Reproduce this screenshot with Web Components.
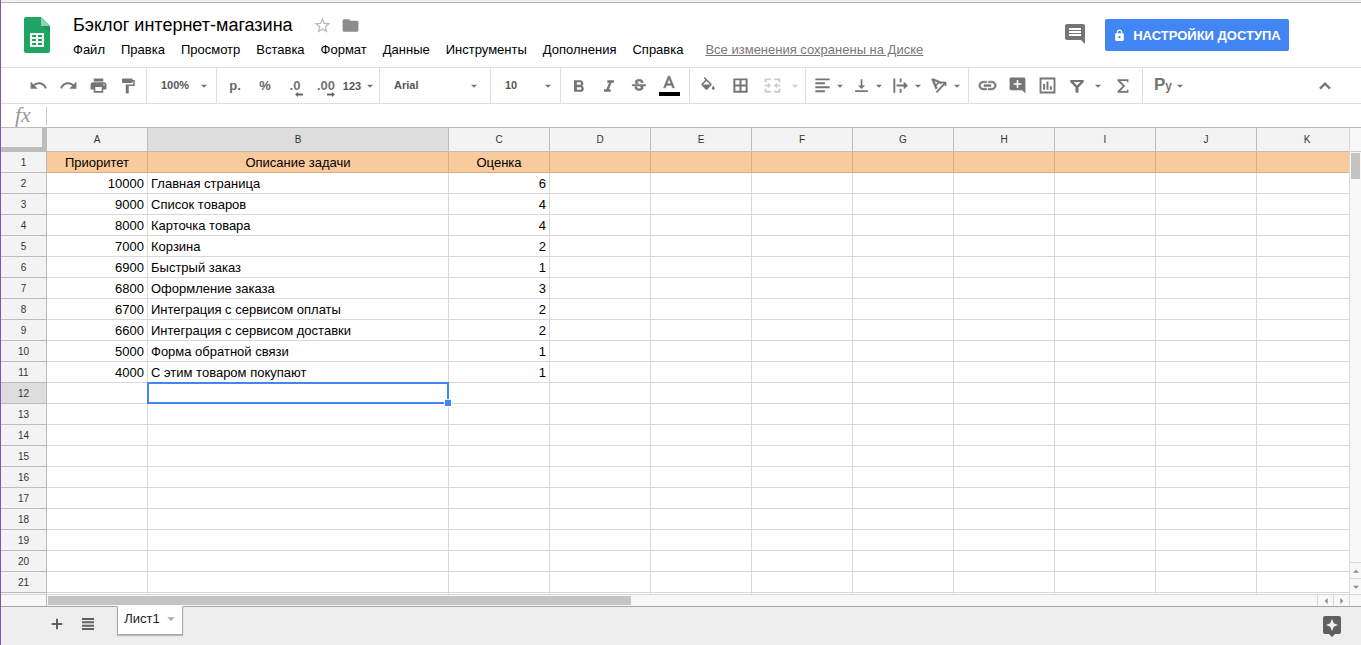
<!DOCTYPE html>
<html lang="ru">
<head>
<meta charset="utf-8">
<title>Бэклог интернет-магазина</title>
<style>
html, body { margin: 0; height: 100%; }
body { font-family: "Liberation Sans", Arial, sans-serif; font-size: 13px; color: #000; background: #fff; overflow: hidden; }
</style>
</head>
<body>
<sheet-app></sheet-app>
<script>
const RESET = `
*, *::before, *::after { box-sizing: border-box; }
button, select, input { font: inherit; color: inherit; background: none; border: 0; margin: 0; padding: 0; border-radius: 0; outline: 0; appearance: none; }
button, select { cursor: pointer; }
`;

const ICONS = {
  undo: '<path d="M12.5 8c-2.65 0-5.05.99-6.9 2.6L2 7v9h9l-3.62-3.62c1.39-1.16 3.16-1.88 5.12-1.88 3.54 0 6.55 2.31 7.6 5.5l2.37-.78C21.08 11.03 17.15 8 12.5 8z"/>',
  redo: '<path d="M18.4 10.6C16.55 8.99 14.15 8 11.5 8c-4.65 0-8.58 3.03-9.96 7.22L3.9 16c1.05-3.19 4.05-5.5 7.6-5.5 1.95 0 3.73.72 5.12 1.88L13 16h9V7l-3.6 3.6z"/>',
  print: '<path d="M19 8H5c-1.66 0-3 1.34-3 3v6h4v4h12v-4h4v-6c0-1.66-1.34-3-3-3zm-3 11H8v-5h8v5zm3-7c-.55 0-1-.45-1-1s.45-1 1-1 1 .45 1 1-.45 1-1 1zm-1-9H6v4h12V3z"/>',
  paint: '<path d="M18 4V3c0-.55-.45-1-1-1H5c-.55 0-1 .45-1 1v4c0 .55.45 1 1 1h12c.55 0 1-.45 1-1V6h1v4H9v11c0 .55.45 1 1 1h2c.55 0 1-.45 1-1v-9h8V4h-3z"/>',
  bold: '<path d="M15.6 11.79c.97-.67 1.65-1.77 1.65-2.79 0-2.26-1.75-4-4-4H6v14h8.04c2.09 0 3.71-1.7 3.71-3.79 0-1.52-.86-2.82-2.15-3.42zM9.500 7.500h3.500c.83 0 1.5.67 1.5 1.5s-.67 1.5-1.5 1.5h-3.500v-3zm4 9h-4v-3h4c.83 0 1.500.67 1.500 1.500s-.67 1.500-1.500 1.500z"/>',
  italic: '<path d="M10 5v3h2.210l-3.420 8H6v3h8v-3h-2.210l3.420-8H18V5z"/>',
  strike: '<path stroke="currentColor" stroke-width=".6" d="M7.240 8.750c-.26-.48-.39-1.030-.39-1.670 0-.61.130-1.160.4-1.670.26-.5.63-.93 1.110-1.290.48-.35 1.050-.63 1.700-.83.66-.19 1.390-.29 2.180-.29.81 0 1.540.11 2.210.34.660.22 1.230.54 1.690.94.470.4.830.88 1.080 1.430s.380 1.150.380 1.810h-3.010c0-.31-.05-.59-.15-.85-.09-.27-.24-.49-.44-.68-.2-.19-.45-.33-.75-.44-.3-.1-.66-.16-1.060-.16-.39 0-.74.04-1.030.13s-.53.21-.72.36c-.19.16-.34.34-.44.55-.1.21-.15.43-.15.66 0 .480.250.88.740 1.210.380.25.770.480 1.410.700H7.390c-.05-.08-.11-.17-.15-.250zM21 12v-2H3v2h9.620c.18.07.4.14.55.2.370.17.660.34.870.510s.350.36.430.57c.07.2.110.430.110.690 0 .23-.05.450-.14.660-.09.2-.23.380-.42.530-.19.150-.42.260-.71.350-.29.080-.63.130-1.010.130-.43 0-.83-.04-1.180-.13s-.66-.23-.91-.42c-.25-.19-.45-.44-.59-.75s-.25-.76-.25-1.210H6.400c0 .550.080 1.130.240 1.580s.370.850.650 1.210c.280.350.600.660.980.920.370.260.780.480 1.220.650.440.170.900.300 1.380.390.480.080.960.130 1.440.130.800 0 1.530-.09 2.180-.28s1.210-.45 1.670-.79c.460-.34.820-.77 1.070-1.270s.380-1.070.380-1.710c0-.6-.1-1.140-.31-1.610-.05-.11-.11-.23-.17-.330H21z"/>',
  color: '<path stroke="currentColor" stroke-width=".7" d="M11 5 5.500 19h2.250l1.120-3h6.250l1.120 3h2.250L13 5h-2zm-1.380 9L12 7.670 14.380 14H9.620z"/>',
  fill: '<path d="M16.560 8.940 7.620 0 6.210 1.410l2.380 2.380-5.150 5.150c-.59.590-.59 1.540 0 2.120l5.500 5.500c.290.290.680.440 1.060.440s.770-.150 1.060-.440l5.500-5.500c.590-.580.590-1.530 0-2.120zM5.210 10 10 5.210 14.790 10H5.210zM19 11.500s-2 2.170-2 3.500c0 1.100.900 2 2 2s2-.900 2-2c0-1.330-2-3.500-2-3.500z"/>',
  borders: '<path d="M3 3v18h18V3H3zm7.700 15.500H5.500v-5.200h5.200v5.200zm0-7.800H5.500V5.500h5.200v5.200zm7.800 7.800h-5.200v-5.200h5.200v5.200zm0-7.800h-5.200V5.500h5.200v5.200z"/>',
  merge: '<path d="M2 3h8v2.500H4.500V8H2zM14 3h8v5h-2.500V5.500H14zM2 16h2.500v2.500H10V21H2zM19.500 16H22v5h-8v-2.500h5.500zM2 11h4V8.500l4.500 3.500L6 15.500V13H2zM22 11h-4V8.500L13.500 12l4.500 3.500V13h4z"/>',
  left: '<path d="M3 3h18v2.400H3zM3 8h12v2.400H3zM3 13h18v2.400H3zM3 18h12v2.400H3z"/>',
  bottom: '<path d="M17 12h-3.800V3h-2.400v9H7l5 5 5-5zM3 18.600V21h18v-2.400H3z"/>',
  wrap: '<path d="M3 3h2.400v18H3zM11 3h2.400v5H11zM11 16h2.400v5H11zM7 10.800h9V7l5.500 5-5.500 5v-3.800H7z"/>',
  rotate: '<path stroke="currentColor" stroke-width=".6" d="M2 3l2.100-1 12.800 5.400-1.900 1.900-2.700-1.200-3.800 3.800 1.200 2.700-1.900 1.900zm3.500 1.900 2.300 5.100 2.800-2.800zM21.500 6.500v5.800l-2-2L9.500 21 8 19.500 18 9l-2.500-2.500z"/>',
  link: '<path stroke="currentColor" stroke-width=".6" d="M3.900 12c0-1.710 1.390-3.100 3.100-3.100h4V7H7c-2.760 0-5 2.240-5 5s2.240 5 5 5h4v-1.900H7c-1.710 0-3.100-1.390-3.100-3.100zM8 13h8v-2H8v2zm9-6h-4v1.900h4c1.710 0 3.100 1.390 3.100 3.100s-1.390 3.100-3.100 3.100h-4V17h4c2.760 0 5-2.240 5-5s-2.240-5-5-5z"/>',
  addcomment: '<path d="M22 4c0-1.100-.9-2-2-2H4c-1.100 0-2 .9-2 2v12c0 1.100.9 2 2 2h14l4 4V4zm-5 7h-4v4h-2v-4H7V9h4V5h2v4h4v2z"/>',
  chart: '<path d="M2 2v20h20V2zm17.700 17.700H4.300V4.300h15.400zM6.500 10H9v7.500H6.500zM10.800 7h2.400v10.500h-2.400zM15 13h2.500v4.500H15z"/>',
  filter: '<path d="M3 4v2.500l7 7.500v7h4v-7l7-7.500V4zm4.500 2.500h9L12 11.200z" fill-rule="evenodd"/>',
  sum: '<path d="M18.500 7.500V4h-13v2l6.200 6-6.200 6v2h13v-3.500h-1.800V18H8.800l5.900-6-5.900-6h7.900v1.500z"/>',
  up: '<path d="M12 8l-6 6 1.410 1.410L12 10.830l4.590 4.580L18 14z" stroke="currentColor" stroke-width=".6"/>',
  star: '<path d="M22 9.240l-7.190-.62L12 2 9.190 8.630 2 9.240l5.460 4.730L5.820 21 12 17.270 18.180 21l-1.630-7.030L22 9.240zM12 15.400l-3.760 2.270 1-4.280-3.320-2.880 4.380-.38L12 6.100l1.710 4.040 4.380.38-3.320 2.880 1 4.280L12 15.400z"/>',
  folder: '<path d="M10 4H4c-1.100 0-2 .9-2 2v12c0 1.100.9 2 2 2h16c1.100 0 2-.9 2-2V8c0-1.100-.9-2-2-2h-8l-2-2z"/>',
  comments: '<path d="M22 4c0-1.100-.9-2-2-2H4c-1.100 0-2 .9-2 2v12c0 1.100.9 2 2 2h14l4 4V4zm-4 10H6v-2h12v2zm0-3H6V9h12v2zm0-3H6V6h12v2z"/>',
  lock: '<path d="M18 8h-1V6c0-2.760-2.240-5-5-5S7 3.240 7 6v2H6c-1.100 0-2 .9-2 2v10c0 1.100.9 2 2 2h12c1.100 0 2-.9 2-2V10c0-1.100-.9-2-2-2zm-6 9c-1.100 0-2-.9-2-2s.9-2 2-2 2 .9 2 2-.9 2-2 2zM9 8V6c0-1.660 1.340-3 3-3s3 1.340 3 3v2z"/>',
  plus: '<path d="M10.500 4h3v6.500H20v3h-6.500V20h-3v-6.500H4v-3h6.500z"/>',
  list: '<path d="M3 3h18v3H3zM3 8h18v3H3zM3 13h18v3H3zM3 18h18v3H3z"/>',
  explore: '<path d="M5 2h14a2 2 0 0 1 2 2v14a2 2 0 0 1-2 2h-4l-3 3-3-3H5a2 2 0 0 1-2-2V4a2 2 0 0 1 2-2zm7 3-1.800 4.200L6 11l4.200 1.800L12 17l1.800-4.200L18 11l-4.200-1.800z" fill-rule="evenodd"/>',
  down: '<path d="M3 8h18l-9 9z"/>',
  uptri: '<path d="M3 17h18l-9-9z"/>',
  prev: '<path d="M17 3v18l-9-9z"/>',
  next: '<path d="M7 3v18l9-9z"/>'
};

function define(name, render) {
  customElements.define(name, class extends HTMLElement {
    connectedCallback() {
      if (this.shadowRoot) return;
      const root = this.attachShadow({ mode: 'open' });
      const t = document.createElement('template');
      t.innerHTML = render(this);
      root.append(t.content.cloneNode(true));
    }
  });
}

define('sheet-icon', el => {
  const size = el.getAttribute('size') || 19;
  return `<style>:host{display:inline-flex;flex:none}svg{display:block;fill:currentColor}</style>
  <svg width="${size}" height="${size}" viewBox="0 0 24 24" aria-hidden="true">${ICONS[el.getAttribute('name')]}</svg>`;
});

define('tool-button', el => `<style>${RESET}
:host{display:block;width:30px;flex:none}
button{width:100%;height:35px;display:flex;align-items:center;justify-content:center}
:host([menu]){width:36px}
:host([menu]) button{justify-content:space-between}
.main{display:flex;justify-content:center}
:host([menu]) .main{width:24px}
.arrow{width:12px;display:flex;justify-content:center}
:host([off]){color:#ccc}
</style><button type="button" aria-label="${el.getAttribute('label') || ''}"><span class="main"><slot></slot></span>${el.hasAttribute('menu') ? '<span class="arrow"><sheet-icon name="down" size="8"></sheet-icon></span>' : ''}</button>`);

define('tool-select', el => `<style>${RESET}
:host{display:grid;grid-template-columns:1fr 24px;align-items:center;font-size:11px;font-weight:bold;color:#555}
select{grid-area:1/1/2/3;height:35px;width:100%;padding:0 0 2px 14px}
sheet-icon{grid-area:1/2;justify-content:center;pointer-events:none;color:#777}
</style><select aria-label="${el.getAttribute('label')}"><option>${el.getAttribute('value')}</option></select><sheet-icon name="down" size="8"></sheet-icon>`);

define('sheet-toolbar', () => `<style>${RESET}
:host{display:flex;height:37px;flex:none;border:solid #dedede;border-width:1px 0;color:#757575}
.g{display:flex;border-right:1px solid #dedede;padding:0 3px;flex:none}
.first{padding-left:22px}
.zoom,.size{width:70px;padding:0}.font{width:111px;padding:0 4px 0 0}
.zoom tool-select,.font tool-select,.size tool-select{flex:1}
.num{width:163px}
.text{width:129px}.cell{width:116px;gap:2px}
.align{width:163px;padding-left:4px;gap:3px}
.ins{width:174px}.ins .drop{margin-right:4px}
.last{border:0;padding-left:7px}
.end{margin-left:auto;padding-right:21px}
.t{font-size:13px;font-weight:bold;color:#666}
.dec{display:grid;width:16px;font-size:13px;font-weight:bold;color:#757575;line-height:13px;padding-top:5px}
.dec svg{display:block;fill:#666;height:5px;width:8px;justify-self:end}
.n{font-size:11px;font-weight:bold;color:#555}
.col{display:grid;justify-items:center;color:#757575;padding-bottom:3px}
.col i{width:21px;height:4px;background:#000}
.drop{width:12px;display:flex;align-items:center;justify-content:center}
.py{font-size:17px;font-weight:bold;line-height:20px;padding-left:2px}.py small{font-size:12px}
</style>
<div class="g first">
<tool-button label="Отменить"><sheet-icon name="undo"></sheet-icon></tool-button>
<tool-button label="Повторить"><sheet-icon name="redo"></sheet-icon></tool-button>
<tool-button label="Печать"><sheet-icon name="print"></sheet-icon></tool-button>
<tool-button label="Копировать формат"><sheet-icon name="paint" size="18"></sheet-icon></tool-button></div>
<div class="g zoom"><tool-select label="Масштаб" value="100%"></tool-select></div>
<div class="g num">
<tool-button label="Денежный формат"><span class="t">р.</span></tool-button>
<tool-button label="Процентный формат"><span class="t">%</span></tool-button>
<tool-button label="Уменьшить число знаков"><span class="dec">.0<svg viewBox="0 0 8 5"><path d="M0 2.500 3 0v1.500h5v2H3v1.500z"/></svg></span></tool-button>
<tool-button label="Увеличить число знаков"><span class="dec">.00<svg viewBox="0 0 8 5"><path d="M8 2.500 5 0v1.500H0v2h5v1.500z"/></svg></span></tool-button>
<tool-button menu label="Другие форматы"><span class="n">123</span></tool-button></div>
<div class="g font"><tool-select label="Шрифт" value="Arial"></tool-select></div>
<div class="g size"><tool-select label="Размер шрифта" value="10"></tool-select></div>
<div class="g text">
<tool-button label="Полужирный"><sheet-icon name="bold" size="20"></sheet-icon></tool-button>
<tool-button label="Курсив"><sheet-icon name="italic" size="20"></sheet-icon></tool-button>
<tool-button label="Зачеркнутый"><sheet-icon name="strike" size="18"></sheet-icon></tool-button>
<tool-button label="Цвет текста"><span class="col"><sheet-icon name="color" size="20"></sheet-icon><i></i></span></tool-button></div>
<div class="g cell">
<tool-button label="Цвет заливки"><sheet-icon name="fill" size="18"></sheet-icon></tool-button>
<tool-button label="Границы"><sheet-icon name="borders" size="19"></sheet-icon></tool-button>
<tool-button off label="Объединить"><sheet-icon name="merge" size="19"></sheet-icon></tool-button>
<span class="drop" style="color:#ccc"><sheet-icon name="down" size="8"></sheet-icon></span></div>
<div class="g align">
<tool-button menu label="По горизонтали"><sheet-icon name="left"></sheet-icon></tool-button>
<tool-button menu label="По вертикали"><sheet-icon name="bottom" size="17"></sheet-icon></tool-button>
<tool-button menu label="Перенос текста"><sheet-icon name="wrap"></sheet-icon></tool-button>
<tool-button menu label="Поворот текста"><sheet-icon name="rotate" size="18"></sheet-icon></tool-button></div>
<div class="g ins">
<tool-button label="Ссылка"><sheet-icon name="link" size="21"></sheet-icon></tool-button>
<tool-button label="Комментарий"><sheet-icon name="addcomment"></sheet-icon></tool-button>
<tool-button label="Диаграмма"><sheet-icon name="chart"></sheet-icon></tool-button>
<tool-button label="Фильтр"><sheet-icon name="filter" size="18"></sheet-icon></tool-button>
<span class="drop"><sheet-icon name="down" size="8"></sheet-icon></span>
<tool-button label="Функции"><sheet-icon name="sum" size="20"></sheet-icon></tool-button></div>
<div class="g last"><tool-button menu label="Способы ввода"><span class="py">Р<small>у</small></span></tool-button></div>
<div class="g last end"><tool-button label="Скрыть меню"><sheet-icon name="up" size="22"></sheet-icon></tool-button></div>`);

define('sheet-header', () => `<style>${RESET}
:host{display:flex;height:64px;flex:none;padding:0 72px 0 23px}
.logo{margin-top:14px;width:26px;height:36px;flex:none}
.main{margin-left:23px;padding-top:10px;min-width:0}
.row{display:flex;align-items:center;height:24px}
h1{font-size:18px;line-height:24px;font-weight:normal;margin:0 20px 0 0;white-space:nowrap}
.row button{margin-right:9px;display:flex}
.star{color:#bbb}.folder{color:#8c8c8c}
nav{display:flex;gap:16px;height:24px;align-items:center;white-space:nowrap}
nav a{color:#777;margin-left:6px}
.side{margin:16px 0 0 auto;height:32px;display:flex;align-items:center;gap:18px;color:#757575;flex:none}
.share{height:32px;width:184px;background:#4285f4;color:#fff;border-radius:2px;display:flex;align-items:center;justify-content:center;gap:7px;font-weight:bold;font-size:13px;white-space:nowrap}
</style>
<svg class="logo" viewBox="0 0 26 36" aria-hidden="true"><path fill="#1fa463" d="M2 0h15l9 9v25a2 2 0 0 1-2 2H2a2 2 0 0 1-2-2V2a2 2 0 0 1 2-2z"/><path fill="#8ed1b1" d="M17 0l9 9h-9z"/><path fill="#188a50" d="M18 9h8v7z" opacity=".5"/><path fill="#f1f1f1" fill-rule="evenodd" d="M6 16h14v14H6zM8 18v2h4v-2zm6 0v2h4v-2zM8 22v2h4v-2zm6 0v2h4v-2zM8 26v2h4v-2zm6 0v2h4v-2z"/></svg>
<div class="main"><div class="row"><h1>Бэклог интернет-магазина</h1>
<button class="star" aria-label="Пометить"><sheet-icon name="star" size="19"></sheet-icon></button><button class="folder" aria-label="Переместить"><sheet-icon name="folder" size="19"></sheet-icon></button></div>
<nav>${['Файл','Правка','Просмотр','Вставка','Формат','Данные','Инструменты','Дополнения','Справка'].map(t => `<button type="button">${t}</button>`).join('')}<a href="#">Все изменения сохранены на Диске</a></nav></div>
<div class="side"><button aria-label="Комментарии"><sheet-icon name="comments" size="24"></sheet-icon></button>
<button class="share"><sheet-icon name="lock" size="13"></sheet-icon>НАСТРОЙКИ ДОСТУПА</button></div>`);

define('formula-bar', () => `<style>${RESET}
:host{display:flex;height:24px;flex:none;border-bottom:1px solid #bcbcbc;align-items:center}
label{width:45px;padding:0 0 2px 14px;font:italic 22px/21px "Liberation Serif",serif;color:#999}
input{flex:1;height:18px;border-left:1px solid #ccc;padding:0 6px}
</style><label for="f">fx</label><input id="f" type="text">`);

const ROWS = [[10000,'Главная страница',6],[9000,'Список товаров',4],[8000,'Карточка товара',4],[7000,'Корзина',2],[6900,'Быстрый заказ',1],[6800,'Оформление заказа',3],[6700,'Интеграция с сервисом оплаты',2],[6600,'Интеграция с сервисом доставки',2],[5000,'Форма обратной связи',1],[4000,'С этим товаром покупают',1]];
const COLS = 'ABCDEFGHIJK'.split('');

define('sheet-grid', () => {
  const body = [];
  for (let r = 1; r <= 22; r++) {
    const v = r === 1 ? ['Приоритет', 'Описание задачи', 'Оценка'] : (ROWS[r - 2] || []);
    body.push(`<tr${r === 1 ? ' class="head"' : ''}><th scope="row"${r === 12 ? ' class="on"' : ''}>${r < 22 ? r : ''}</th>${COLS.map((c, i) =>
      `<td${r === 12 && i === 1 ? ' class="sel"' : typeof v[i] === 'number' ? ' class="n"' : ''}>${v[i] === undefined ? '' : v[i]}${r === 12 && i === 1 ? '<i></i>' : ''}</td>`).join('')}</tr>`);
  }
  return `<style>${RESET}
:host{display:block;overflow:hidden;min-width:0;min-height:0}
table{table-layout:fixed;width:1357px;border-collapse:separate;border-spacing:0}
.h{width:46px}.a{width:101px}.b{width:301px}
th,td{border:solid #d9d9d9;border-width:0 1px 1px 0;padding:2px 3px 0;height:21px;line-height:18px;white-space:nowrap}
th{background:#f3f3f3;border-color:#bcbcbc;font-size:10px;font-weight:normal;color:#333;text-align:center}
thead th{height:24px;line-height:23px;padding-top:0}
.corner{border-width:0 5px 5px 0}
.on{background:#ddd}
.n{text-align:right}
.head td{background:#f9cb9c;border-color:#d8ad83;text-align:center}
.sel{position:relative}
.sel::before{content:"";position:absolute;inset:-1px;border:2px solid #4285f4}
.sel i{position:absolute;right:-3px;bottom:-3px;width:6px;height:6px;background:#4285f4;box-shadow:0 0 0 1px #fff}
</style><table><colgroup><col class="h"><col class="a"><col class="b">${'<col class="a">'.repeat(9)}</colgroup>
<thead><tr><th class="corner"></th>${COLS.map(c => `<th scope="col"${c === 'B' ? ' class="on"' : ''}>${c}</th>`).join('')}</tr></thead><tbody>${body.join('')}</tbody></table>`;
});

define('sheet-scroll', el => {
  const v = el.hasAttribute('vertical');
  return `<style>${RESET}
:host{display:flex;background:#f8f8f8;color:#8c8c8c;min-width:0;min-height:0;flex-direction:${v ? 'column' : 'row'};border:solid #d9d9d9;border-width:${v ? '0 0 0 1px' : '1px 0 0'}}
.lead{flex:none;${v ? 'height:24px;border-bottom:1px solid #ccc' : 'width:46px;border-right:1px solid #bcbcbc'}}
.track{flex:1;padding:1px;display:flex;min-width:0;min-height:0}
.thumb{background:#c4c4c4;${v ? 'width:100%;height:26px' : 'width:46%;height:100%'}}
button{flex:none;display:flex;align-items:center;justify-content:center;border:0 solid #d9d9d9;${v ? 'height:16px;border-top-width:1px' : 'width:16px;border-left-width:1px'}}
</style><div class="lead"></div><div class="track"><div class="thumb"></div></div>
<button aria-label="Назад"><sheet-icon name="${v ? 'uptri' : 'prev'}" size="8"></sheet-icon></button><button aria-label="Вперёд"><sheet-icon name="${v ? 'down' : 'next'}" size="8"></sheet-icon></button>`;
});

define('sheet-footer', () => `<style>${RESET}
:host{display:flex;height:39px;flex:none;background:#eee;border-top:1px solid #a6a6a6;padding:0 17px 0 40px;color:#5f5f5f}
button{display:flex;align-items:center;justify-content:center;height:34px}
.i{width:31px}
.tab{margin:-1px 0 0 14px;width:66px;height:29px;background:#fff;color:#222;border:1px solid #aaa;border-top-color:#fff;box-shadow:0 1px 1px #bbb;gap:6px;padding-bottom:4px}
.tab sheet-icon{color:#aaa}
.ex{margin-left:auto;height:38px}
</style><button class="i" aria-label="Добавить лист"><sheet-icon name="plus" size="16"></sheet-icon></button>
<button class="i" aria-label="Все листы"><sheet-icon name="list" size="16"></sheet-icon></button>
<button class="tab">Лист1<sheet-icon name="down" size="10"></sheet-icon></button>
<button class="ex" aria-label="Анализ данных"><sheet-icon name="explore" size="24"></sheet-icon></button>`);

define('sheet-app', () => `<style>${RESET}
:host{display:flex;flex-direction:column;height:100vh;border-left:1px solid #7e57b0}
.strip{height:3px;flex:none;background:#f1f1f1;border-bottom:1px solid #b4b4b4}
.work{flex:1;min-height:0;display:grid;grid-template:minmax(0,1fr) 12px / minmax(0,1fr) 12px}
.nub{background:#f8f8f8;border:solid #d9d9d9;border-width:1px 0 0 1px}
</style><div class="strip"></div><sheet-header></sheet-header><sheet-toolbar></sheet-toolbar><formula-bar></formula-bar>
<div class="work"><sheet-grid></sheet-grid><sheet-scroll vertical></sheet-scroll><sheet-scroll></sheet-scroll><div class="nub"></div></div>
<sheet-footer></sheet-footer>`);
</script>
</body>
</html>
